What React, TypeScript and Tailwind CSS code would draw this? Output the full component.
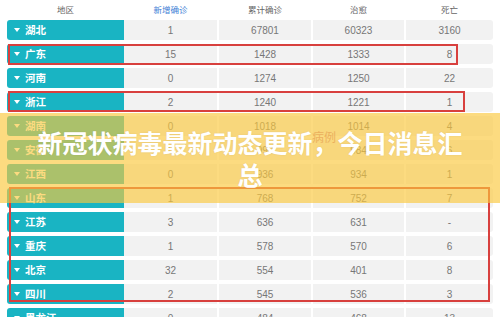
import React from "react";

const rows: [string, string, string, string, string][] = [
  ["湖北", "1", "67801", "60323", "3160"],
  ["广东", "15", "1428", "1333", "8"],
  ["河南", "0", "1274", "1250", "22"],
  ["浙江", "2", "1240", "1221", "1"],
  ["湖南", "0", "1018", "1014", "4"],
  ["安徽", "0", "990", "984", "6"],
  ["江西", "0", "936", "934", "1"],
  ["山东", "1", "768", "752", "7"],
  ["江苏", "3", "636", "631", "-"],
  ["重庆", "1", "578", "570", "6"],
  ["北京", "32", "554", "401", "8"],
  ["四川", "2", "545", "536", "3"],
  ["黑龙江", "0", "484", "468", "13"],
];

const font = { fontFamily: '"Liberation Sans", "Noto Sans CJK SC", sans-serif' };

function Row({ r }: { r: [string, string, string, string, string] }) {
  return (
    <div className="flex h-[20px] mb-[4px]">
      <div className="w-[117px] h-full bg-[#19b4c3] rounded-l-[3px] flex items-center pl-[7px] gap-[5px]">
        <svg width="6" height="4" viewBox="0 0 6 4">
          <path d="M0 0 L6 0 L3 4 Z" fill="#ffffff" />
        </svg>
        <span className="text-white font-bold text-[10.5px] leading-none">{r[0]}</span>
      </div>
      <div className="w-[93px] h-full bg-[#f2f2f2] flex items-center justify-center text-[10px] text-[#777]">{r[1]}</div>
      <div className="w-[2px]" />
      <div className="w-[92px] h-full bg-[#f2f2f2] flex items-center justify-center text-[10px] text-[#777]">{r[2]}</div>
      <div className="w-[2px]" />
      <div className="w-[91px] h-full bg-[#f2f2f2] flex items-center justify-center text-[10px] text-[#777]">{r[3]}</div>
      <div className="w-[2px]" />
      <div className="w-[87px] h-full bg-[#f2f2f2] rounded-r-[3px] flex items-center justify-center text-[10px] text-[#777]">{r[4]}</div>
    </div>
  );
}

export default function App() {
  return (
    <div className="relative w-[500px] h-[317px] overflow-hidden bg-white" style={font}>
      <div className="pl-[7px]">
        <div className="flex h-[20px] items-center text-[8.5px] text-[#666]">
          <div className="w-[117px] text-center">地区</div>
          <div className="w-[93px] text-center text-[#3f7fd6]">新增确诊</div>
          <div className="w-[2px]" />
          <div className="w-[92px] text-center">累计确诊</div>
          <div className="w-[2px]" />
          <div className="w-[91px] text-center">治愈</div>
          <div className="w-[2px]" />
          <div className="w-[87px] text-center">死亡</div>
        </div>
        {rows.map((r) => (
          <Row key={r[0]} r={r} />
        ))}
      </div>

      {/* red highlight boxes */}
      <div className="absolute left-[8px] top-[44px] w-[450px] h-[21px] border-2 border-[#d8403e]" />
      <div className="absolute left-[8px] top-[91px] w-[457px] h-[21px] border-2 border-[#d8403e]" />
      <div className="absolute left-[9px] top-[187px] w-[481px] h-[115px] border-2 border-[#d8403e]" />

      {/* yellow banner */}
      <div className="absolute left-0 right-0 top-[113px] h-[90px] bg-[rgba(250,200,60,0.65)] flex items-center justify-center px-[30px]">
        <span className="absolute left-[312px] top-[16px] text-[12px] text-[#e3964a] opacity-60">病例</span>
        <div
          className="relative text-white font-bold text-[25px] leading-[32px] text-center"
          style={{ fontFamily: '"Noto Sans CJK SC", sans-serif', textShadow: "0 0 2px rgba(0,0,0,0.08)" }}
        >
          新冠状病毒最新动态更新，今日消息汇总
        </div>
      </div>
    </div>
  );
}
